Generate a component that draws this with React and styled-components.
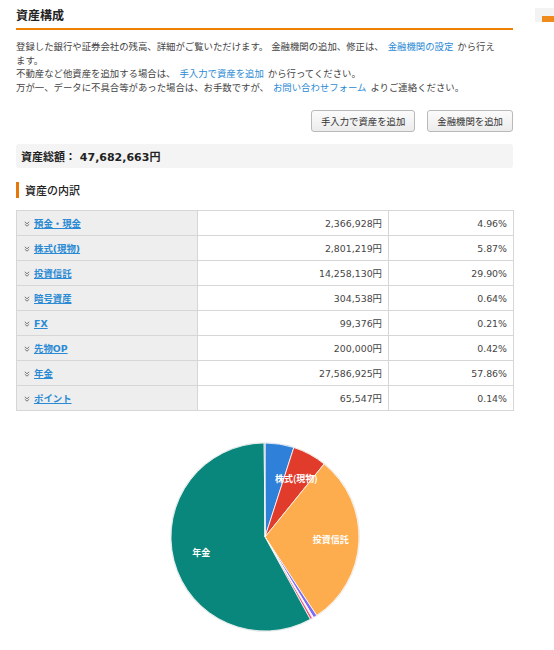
import React from 'react'
import styled, { createGlobalStyle } from 'styled-components'

const GlobalStyle = createGlobalStyle`
  body {
    margin: 0;
    background: #fff;
    overflow: hidden;
    font-family: "DejaVu Sans", "Noto Sans CJK JP", sans-serif;
    color: #333;
  }
`

const Page = styled.div`
  display: flex;
  align-items: flex-start;
`
const Main = styled.div`
  width: 497px;
  margin-left: 16px;
  flex-shrink: 0;
`
const Side = styled.div`
  margin-left: 22px;
  margin-top: 8px;
  width: 40px;
  height: 14px;
  background: #f3f3f3;
  padding: 8px 0 0 7px;
  box-sizing: border-box;
  flex-shrink: 0;
`
const SideTab = styled.div`
  width: 30px;
  height: 6px;
  background: #ef8a1c;
`
const Title = styled.h2`
  margin: 0;
  padding: 8px 0 4px;
  font-size: 12px;
  line-height: 16px;
  font-weight: bold;
  color: #222;
  border-bottom: 2px solid #ee7f00;
`
const Lead = styled.p`
  margin: 10px 0 0;
  font-size: 9.4px;
  line-height: 13.5px;
  color: #444;
`
const Link = styled.a`
  color: #2a8ad4;
  text-decoration: none;
  margin: 0 4px;
`
const Actions = styled.div`
  display: flex;
  justify-content: flex-end;
  gap: 12px;
  margin-top: 16px;
`
const Button = styled.button`
  height: 22px;
  padding: 0 9px;
  font-family: inherit;
  font-size: 9.4px;
  color: #333;
  background: linear-gradient(#fbfbfb, #ececec);
  border: 1px solid #b9b9b9;
  border-radius: 3px;
`
const Total = styled.div`
  margin-top: 12px;
  height: 24px;
  display: flex;
  align-items: center;
  padding-left: 5px;
  background: #f4f4f4;
  border-radius: 3px;
  font-size: 11px;
  font-weight: bold;
  color: #222;
`
const Heading = styled.h3`
  margin: 14px 0 0;
  height: 16px;
  display: flex;
  align-items: center;
  padding-left: 6px;
  border-left: 3px solid #e6780a;
  font-size: 11px;
  font-weight: 500;
  color: #222;
`
const Table = styled.table`
  margin-top: 12px;
  width: 100%;
  border-collapse: collapse;
  table-layout: fixed;
  font-size: 9.4px;
`
const Row = styled.tr`
  height: 25px;
`
const NameCell = styled.td`
  background: #eee;
  border: 1px solid #d6d6d6;
  padding: 0 0 0 7px;
`
const NumCell = styled.td`
  border: 1px solid #d6d6d6;
  text-align: right;
  padding: 0 6px 0 0;
  color: #444;
`
const NameLink = styled.a`
  color: #2a8ad4;
  font-weight: bold;
  text-decoration: underline;
  margin-left: 4px;
`
const Chevron = styled.svg`
  width: 6px;
  height: 6px;
  vertical-align: 0px;
`
const ChartWrap = styled.div`
  display: flex;
  justify-content: center;
  margin-top: 26px;
`

const rows = [
  { name: '預金・現金', amount: '2,366,928円', pct: 4.96, color: '#2f80d9' },
  { name: '株式(現物)', amount: '2,801,219円', pct: 5.87, color: '#e13b2b' },
  { name: '投資信託', amount: '14,258,130円', pct: 29.9, color: '#fdad4d' },
  { name: '暗号資産', amount: '304,538円', pct: 0.64, color: '#7c6cf2' },
  { name: 'FX', amount: '99,376円', pct: 0.21, color: '#f7f0f4' },
  { name: '先物OP', amount: '200,000円', pct: 0.42, color: '#f0557e' },
  { name: '年金', amount: '27,586,925円', pct: 57.86, color: '#0a877c' },
  { name: 'ポイント', amount: '65,547円', pct: 0.14, color: '#555' },
]

const Pie = () => {
  const cx = 100, cy = 100, r = 94
  let acc = 0
  const pt = (deg, rad) => {
    const a = (deg - 90) * Math.PI / 180
    return [cx + rad * Math.cos(a), cy + rad * Math.sin(a)]
  }
  const slices = rows.map(row => {
    const start = acc * 3.6
    acc += row.pct
    const end = acc * 3.6
    const [x1, y1] = pt(start, r)
    const [x2, y2] = pt(end, r)
    const large = end - start > 180 ? 1 : 0
    const d = `M${cx},${cy} L${x1},${y1} A${r},${r} 0 ${large} 1 ${x2},${y2} Z`
    const [lx, ly] = pt((start + end) / 2, r * 0.7)
    return { ...row, d, lx, ly }
  })
  return (
    <svg width="200" height="200" viewBox="0 0 200 200">
      <circle cx={cx} cy={cy} r={r + 0.8} fill="#e2e2e2" />
      {slices.map(s => (
        <path key={s.name} d={s.d} fill={s.color} stroke="#fff" strokeWidth="0.8" />
      ))}
      {slices.filter(s => s.pct > 5).map(s => (
        <text key={s.name} x={s.lx} y={s.ly} fill="#fff" fontSize="9" fontWeight="bold"
          textAnchor="middle" dominantBaseline="middle"
          fontFamily='"Noto Sans CJK JP", sans-serif'>{s.name}</text>
      ))}
    </svg>
  )
}

const App = () => {
  return (
    <Page>
      <GlobalStyle />
      <Main>
        <Title>資産構成</Title>
        <Lead>
          登録した銀行や証券会社の残高、詳細がご覧いただけます。 金融機関の追加、修正は、<Link>金融機関の設定</Link>から行え<br />
          ます。<br />
          不動産など他資産を追加する場合は、<Link>手入力で資産を追加</Link>から行ってください。<br />
          万が一、データに不具合等があった場合は、お手数ですが、<Link>お問い合わせフォーム</Link>よりご連絡ください。
        </Lead>
        <Actions>
          <Button>手入力で資産を追加</Button>
          <Button>金融機関を追加</Button>
        </Actions>
        <Total>資産総額： 47,682,663円</Total>
        <Heading>資産の内訳</Heading>
        <Table>
          <colgroup>
            <col style={{ width: 181 }} />
            <col style={{ width: 191 }} />
            <col style={{ width: 125 }} />
          </colgroup>
          <tbody>
            {rows.map(row => (
              <Row key={row.name}>
                <NameCell>
                  <Chevron viewBox="0 0 6 6">
                    <path d="M0.8 0.8 L3 2.8 L5.2 0.8 M0.8 3.2 L3 5.2 L5.2 3.2" fill="none" stroke="#777" strokeWidth="1" />
                  </Chevron>
                  <NameLink>{row.name}</NameLink>
                </NameCell>
                <NumCell>{row.amount}</NumCell>
                <NumCell>{row.pct.toFixed(2)}%</NumCell>
              </Row>
            ))}
          </tbody>
        </Table>
        <ChartWrap>
          <Pie />
        </ChartWrap>
      </Main>
      <Side>
        <SideTab />
      </Side>
    </Page>
  )
}

export default App
